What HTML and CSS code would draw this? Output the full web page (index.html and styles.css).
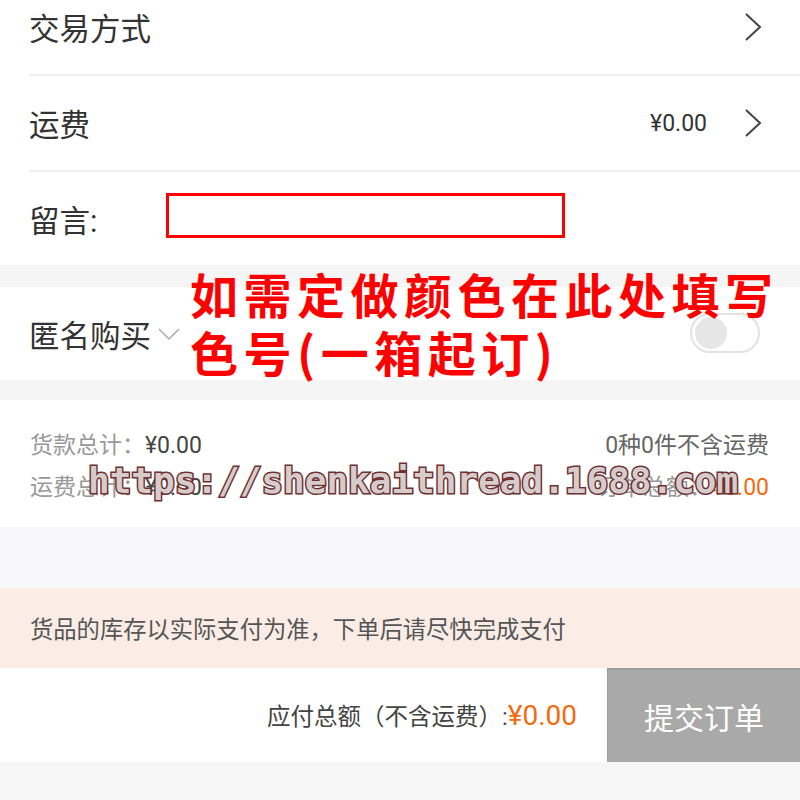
FILE: index.html
```html
<!DOCTYPE html>
<html lang="zh-CN">
<head>
  <meta charset="UTF-8">
  <title>确认订单</title>
  <link rel="stylesheet" href="styles.css">
</head>
<body>
  <div class="page">
    <div class="order">
      <div class="row">
        <span class="label">交易方式</span>
        <span class="right">
          <svg class="arrow" width="18" height="30" viewBox="0 0 18 30"><polyline points="2,2 16,15 2,28" /></svg>
        </span>
      </div>
      <div class="row">
        <span class="label">运费</span>
        <span class="right">
          <span class="price">¥0.00</span>
          <svg class="arrow" width="18" height="30" viewBox="0 0 18 30"><polyline points="2,2 16,15 2,28" /></svg>
        </span>
      </div>
      <div class="row no-line">
        <span class="label">留言:</span>
        <div class="message-box"></div>
      </div>
    </div>

    <div class="gap"></div>

    <div class="row anon">
      <span class="label">匿名购买
        <svg class="down" width="22" height="14" viewBox="0 0 22 14"><polyline points="1,2 11,12 21,2" /></svg>
      </span>
      <div class="toggle"><div class="knob"></div></div>
    </div>

    <div class="gap small"></div>

    <div class="summary">
      <div class="sum-row">
        <span><span class="muted">货款总计：</span>¥0.00</span>
        <span class="count">0种0件不含运费</span>
      </div>
      <div class="sum-row">
        <span><span class="muted">运费总计：</span>¥0.00</span>
        <span><span class="muted">订单总额：</span><span class="orange">¥0.00</span></span>
      </div>
    </div>

    <div class="gap big"></div>

    <div class="notice">货品的库存以实际支付为准，下单后请尽快完成支付</div>

    <div class="footer">
      <div class="total">应付总额（不含运费）:<span class="total-price">¥0.00</span></div>
      <button class="submit">提交订单</button>
    </div>
  </div>

  <div class="note">如需定做颜色在此处填写<br>色号(一箱起订)</div>
  <div class="watermark">https://shenkaithread.1688.com</div>
</body>
</html>
```

FILE: styles.css
```css
body {
  margin: 0;
  font-family: 'Roboto', 'Noto Sans CJK SC', sans-serif;
  background-color: #f6f6f6;
  color: #333;
  overflow: hidden;
}

.page {
  width: 800px;
}

.order {
  background-color: white;
  margin-top: -20px;
}

.row {
  display: flex;
  align-items: center;
  justify-content: space-between;
  height: 94px;
  margin-left: 29px;
  padding-right: 38px;
  border-bottom: 2px solid #f0f0f0;
}

.row.no-line {
  height: 93px;
  border-bottom: none;
  justify-content: flex-start;
}

.label {
  font-size: 30.5px;
  display: flex;
  align-items: center;
}

.right {
  display: flex;
  align-items: center;
}

.price {
  font-size: 23px;
  margin-right: 37px;
}

.arrow polyline {
  fill: none;
  stroke: #444;
  stroke-width: 2;
}

.message-box {
  width: 393px;
  height: 39px;
  margin-left: 69px;
  margin-top: -7px;
  border: 3px solid #ff0000;
  background-color: white;
}

.gap {
  height: 22px;
  background-color: #f5f5f5;
}

.gap.small {
  height: 20px;
}

.gap.big {
  height: 61px;
  background-color: #f8f8fa;
}

.anon {
  height: 93px;
  margin-left: 0;
  padding-left: 29px;
  padding-right: 40px;
  border-bottom: none;
  background-color: white;
}

.down {
  margin-left: 7px;
}

.down polyline {
  fill: none;
  stroke: #aaa;
  stroke-width: 1.5;
}

.toggle {
  box-sizing: border-box;
  width: 70px;
  height: 40px;
  margin-top: -2px;
  border: 2px solid #e2e2e2;
  border-radius: 20px;
  display: flex;
  align-items: center;
  padding: 0 3px;
}

.knob {
  width: 32px;
  height: 32px;
  border-radius: 50%;
  background-color: #e6e6e6;
}

.summary {
  background-color: white;
  padding: 22px 31px 21px 30px;
}

.sum-row {
  display: flex;
  justify-content: space-between;
  align-items: center;
  height: 42px;
  font-size: 23px;
  color: #444;
}

.muted {
  color: #999;
}

.count {
  color: #666;
}

.orange {
  color: #f26b0f;
}

.notice {
  height: 80px;
  display: flex;
  align-items: center;
  padding-left: 30px;
  background-color: #fbede5;
  color: #555;
  font-size: 23.3px;
}

.footer {
  display: flex;
  justify-content: flex-end;
  align-items: center;
  height: 94px;
  background-color: white;
}

.total {
  font-size: 23.5px;
  color: #444;
  margin-right: 30px;
}

.total-price {
  font-size: 28px;
  color: #f26b0f;
}

.submit {
  width: 193px;
  height: 94px;
  border: none;
  border-top: 2px solid #9c9c9c;
  border-left: 1px solid #9c9c9c;
  background-color: #a9a9a9;
  color: white;
  font-family: 'Noto Sans CJK SC', sans-serif;
  font-size: 30px;
}

.note {
  position: absolute;
  left: 190px;
  top: 264px;
  font-family: 'Noto Sans CJK SC', sans-serif;
  font-weight: bold;
  font-size: 48px;
  line-height: 58px;
  letter-spacing: 5.5px;
  color: #ff0000;
}

.watermark {
  position: absolute;
  left: 88px;
  top: 461px;
  font-family: 'DejaVu Sans Mono', monospace;
  font-weight: bold;
  font-size: 36px;
  line-height: 40px;
  color: #d6cccc;
  -webkit-text-stroke: 3px #6e3030;
  paint-order: stroke fill;
}
```
